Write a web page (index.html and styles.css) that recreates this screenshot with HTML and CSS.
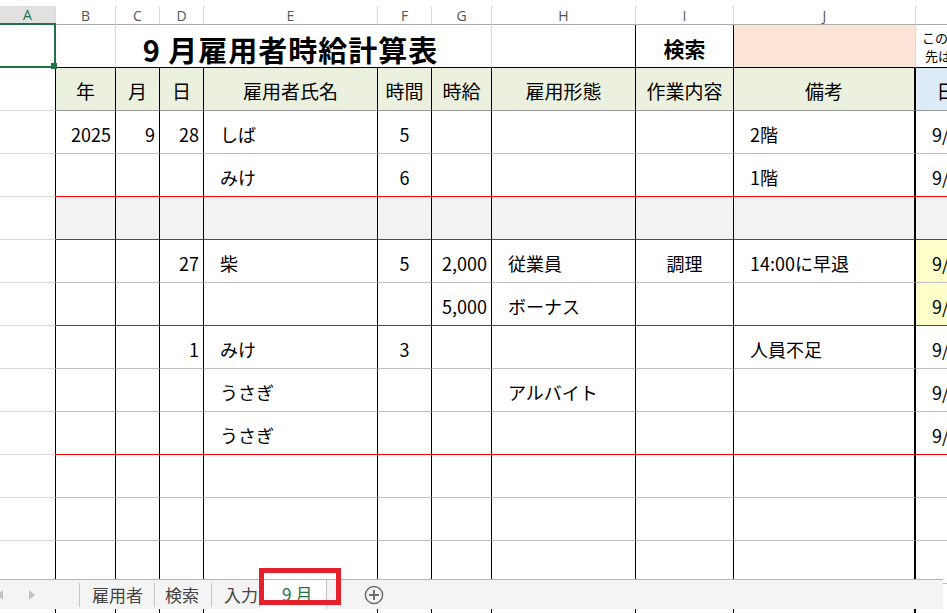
FILE: index.html
```html
<!DOCTYPE html>
<html lang="ja">
<head>
    <meta charset="UTF-8">
    <meta name="viewport" content="width=device-width, initial-scale=1.0">
    <title>9月雇用者時給計算表</title>
    <link rel="stylesheet" href="styles.css">
</head>
<body>
    <div class="sheet" id="sheet">
        <!-- column letters -->
        <div class="colhead sel">A</div>
        <div class="colhead">B</div>
        <div class="colhead">C</div>
        <div class="colhead">D</div>
        <div class="colhead">E</div>
        <div class="colhead">F</div>
        <div class="colhead">G</div>
        <div class="colhead">H</div>
        <div class="colhead">I</div>
        <div class="colhead">J</div>
        <div class="colhead">K</div>
        <div class="colhead">L</div>

        <!-- row 1: title -->
        <div class="cell a1"><span class="selection"></span></div>
        <div class="cell topb"></div>
        <div class="cell topb title">9 月雇用者時給計算表</div>
        <div class="cell topb blk"></div>
        <div class="cell topb blk search">検索</div>
        <div class="cell topb key"></div>
        <div class="cell topb note">この列から<br>&nbsp;先は計算用</div>
        <div class="cell"></div>

        <!-- row 2: headings -->
        <div class="cell blk"></div>
        <div class="cell hd blk">年</div>
        <div class="cell hd blk">月</div>
        <div class="cell hd blk">日</div>
        <div class="cell hd blk">雇用者氏名</div>
        <div class="cell hd blk">時間</div>
        <div class="cell hd blk">時給</div>
        <div class="cell hd blk">雇用形態</div>
        <div class="cell hd blk">作業内容</div>
        <div class="cell hd blk2">備考</div>
        <div class="cell hd blue">日付</div>
        <div class="cell"></div>
        <!-- data rows are added below -->
    </div>

    <div class="tabs">
        <span class="arrow left"></span>
        <span class="arrow right"></span>
        <span class="tab first">雇用者</span>
        <span class="tab second">検索</span>
        <span class="tab third">入力</span>
        <span class="tab active">9月<span class="mark"></span></span>
        <svg class="add" width="20" height="20" viewBox="0 0 20 20">
            <circle cx="10" cy="10" r="8.6" fill="none" stroke="#6f6f6f" stroke-width="1.5"/>
            <path d="M10 5v10M5 10h10" stroke="#6f6f6f" stroke-width="2"/>
        </svg>
    </div>

    <script>
        // B..K for every row, in column order
        const rows = [
            { cells: ['2025', '9', '28', 'しば', '5', '', '', '', '2階', '9/28'] },
            { red: true, cells: ['', '', '', 'みけ', '6', '', '', '', '1階', '9/28'] },
            { red: true, gray: true, cells: [] },
            { yellow: true, cells: ['', '', '27', '柴', '5', '2,000', '従業員', '調理', '14:00に早退', '9/27'] },
            { red: true, yellow: true, cells: ['', '', '', '', '', '5,000', 'ボーナス', '', '', '9/27'] },
            { cells: ['', '', '1', 'みけ', '3', '', '', '', '人員不足', '9/1'] },
            { cells: ['', '', '', 'うさぎ', '', '', 'アルバイト', '', '', '9/1'] },
            { red: true, cells: ['', '', '', 'うさぎ', '', '', '', '', '', '9/1'] },
            { cells: [] },
            { cells: [] },
            { cells: [] },
            { cells: [] }
        ];

        const align = ['r', 'r', 'r', 'l', 'm', 'r', 'l', 'm', 'l', 'l'];
        const sheet = document.getElementById('sheet');

        function addCell(cls, text) {
            const div = document.createElement('div');
            div.className = 'cell ' + cls;
            div.textContent = text || '';
            sheet.appendChild(div);
        }

        rows.forEach(row => {
            addCell('blk');
            align.forEach((a, i) => {
                let cls = 'data ' + a;
                if (i < 8) cls += ' blk';
                if (i === 8) cls += ' blk2';
                if (row.red) cls += ' redb';
                if (row.gray) cls += ' gray';
                if (row.yellow && i === 9) cls += ' yellow';
                addCell(cls, row.cells[i]);
            });
            addCell('');
        });
    </script>
</body>
</html>
```

FILE: styles.css
```css
body {
  margin: 0;
  overflow: hidden;
  background-color: #fff;
  font-family: "Noto Sans CJK JP", sans-serif;
  color: #000;
}

/* grid */

.sheet {
  display: grid;
  grid-template-columns: 56px 60px 44px 44px 174px 54px 60px 144px 98px 182px 80px 100px;
  grid-template-rows: 25px;
  grid-auto-rows: 43px;
  width: max-content;
}

.colhead {
  margin-top: 6px;
  border-right: 1px solid #dadada;
  border-bottom: 1px solid #ababab;
  display: flex;
  justify-content: center;
  align-items: center;
  font-family: "Open Sans", sans-serif;
  font-size: 14px;
  color: #555;
}

.colhead.sel {
  background-color: #e1e1e1;
  color: #217346;
  border-bottom: 2px solid #217346;
}

.cell {
  box-sizing: border-box;
  border-right: 1px solid #dadada;
  border-bottom: 1px solid #dadada;
  display: flex;
  align-items: center;
  padding-top: 3px;
  font-size: 18px;
  white-space: nowrap;
  overflow: hidden;
}

.cell.data {
  border-bottom-color: #bfbfbf;
}

.cell.blk {
  border-right-color: #000;
}

.cell.blk2 {
  border-right: 2px solid #000;
}

.cell.topb {
  border-bottom-color: #000;
}

.cell.redb {
  border-bottom-color: #ff0000;
}

.r {
  justify-content: flex-end;
  padding-right: 4px;
}

.l {
  padding-left: 16px;
}

.m {
  justify-content: center;
}

.gray {
  background-color: #f2f2f2;
}

.yellow {
  background-color: #ffffcc;
}

/* row 1 */

.a1 {
  position: relative;
  overflow: visible;
  z-index: 2;
}

.selection {
  position: absolute;
  top: -2px;
  left: -3px;
  right: -1px;
  bottom: -1px;
  border: 2px solid #217346;
}

.selection:after {
  content: '';
  position: absolute;
  right: -3px;
  bottom: -3px;
  width: 6px;
  height: 6px;
  background: #217346;
}

.title {
  grid-column: span 5;
  justify-content: center;
  overflow: visible;
  padding-top: 6px;
  padding-right: 26px;
  font-size: 29px;
  line-height: 34px;
  font-weight: bold;
  letter-spacing: 1px;
}

.search {
  justify-content: center;
  padding-top: 4px;
  font-size: 21px;
  line-height: 28px;
  font-weight: bold;
}

.key {
  background-color: #fce4d6;
}

.note {
  flex-direction: column;
  justify-content: center;
  align-items: flex-start;
  padding-top: 2px;
  padding-left: 6px;
  font-size: 13px;
  line-height: 18px;
}

/* row 2 */

.hd {
  background-color: #ebf1de;
  border-bottom-color: #999;
  justify-content: center;
  font-size: 19px;
}

.hd.blue {
  background-color: #ddebf7;
}

/* sheet tabs */

.tabs {
  position: absolute;
  left: 0;
  top: 579px;
  width: 943px;
  height: 30px;
  box-sizing: border-box;
  background-color: #f4f4f4;
  border-top: 1px solid #b4b4b4;
  display: flex;
  align-items: center;
  font-size: 17px;
  color: #444;
}

.arrow {
  width: 0;
  height: 0;
  border-top: 5px solid transparent;
  border-bottom: 5px solid transparent;
}

.arrow.left {
  margin-left: -3px;
  border-right: 6px solid #c2c2c2;
}

.arrow.right {
  margin-left: 26px;
  border-left: 6px solid #c2c2c2;
}

.tab {
  height: 24px;
  line-height: 24px;
  padding: 0 10px;
  border-right: 1px solid #c6c6c6;
}

.tab.first {
  margin-left: 44px;
  padding: 0 11px 0 12px;
  border-left: 1px solid #c6c6c6;
}

.tab.second {
  padding: 0 12px 0 10px;
}

.tab.third {
  padding: 0 1px 0 12px;
}

.tab.active {
  position: relative;
  height: 29px;
  line-height: 27px;
  margin-top: -1px;
  padding: 0 10px 0 22px;
  background-color: #fff;
  color: #217346;
  letter-spacing: 4px;
}

.mark {
  position: absolute;
  left: -1px;
  top: -12px;
  width: 82px;
  height: 37px;
  box-sizing: border-box;
  border: 5px solid #e5222b;
}

.add {
  margin-left: 37px;
}
```
